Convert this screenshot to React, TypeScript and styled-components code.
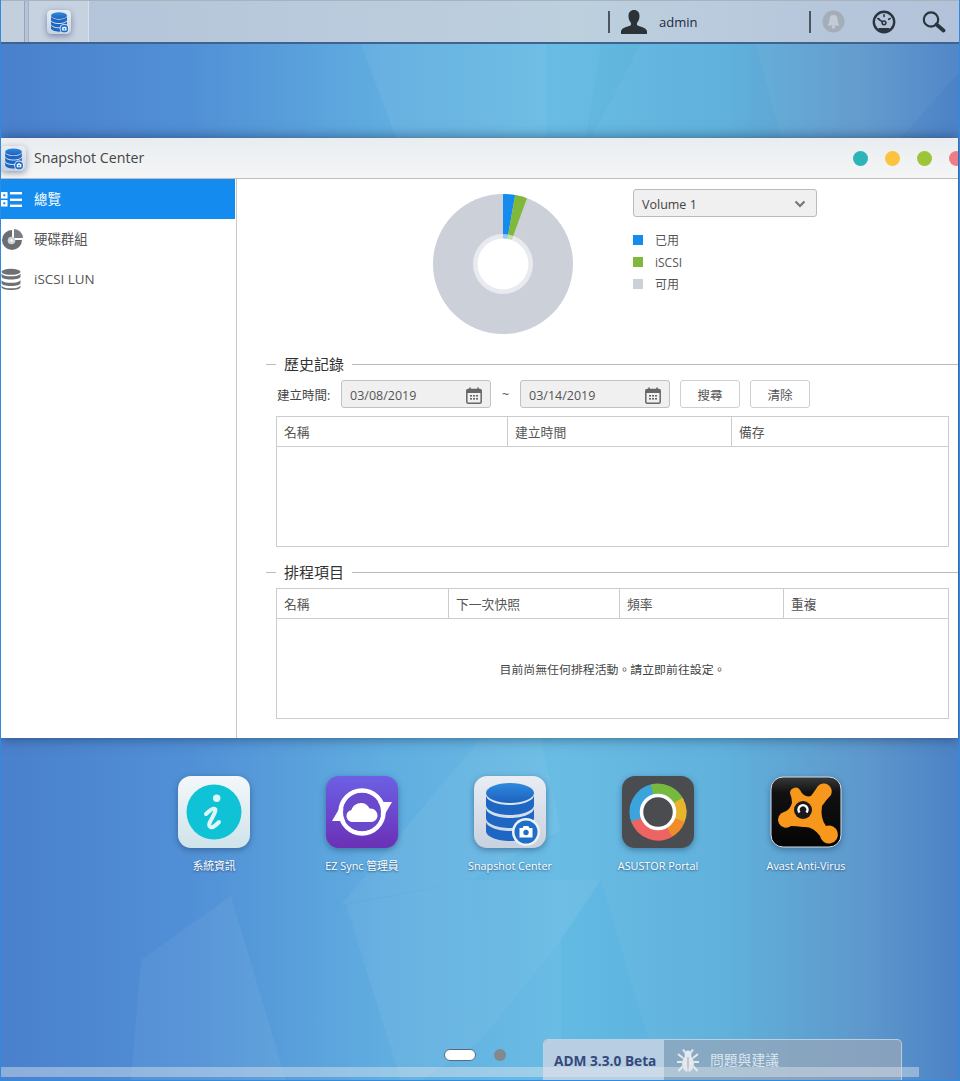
import React from "react";
import styled, { createGlobalStyle } from "styled-components";

const FONT = `"Open Sans", "Noto Sans CJK TC", sans-serif`;

const GlobalStyle = createGlobalStyle`
  html, body {
    margin: 0;
    padding: 0;
    background: #4a86c8;
  }
  * {
    box-sizing: border-box;
  }
`;

const Page = styled.div`
  position: relative;
  width: 960px;
  height: 1081px;
  overflow: hidden;
  display: flex;
  flex-direction: column;
  border: solid #2f8be0;
  border-width: 0 1px 1px;
  font-family: ${FONT};
  background: linear-gradient(
    90deg,
    #4a80cc 0%,
    #5190d6 20%,
    #60ade0 40%,
    #69bce4 58%,
    #60b2dc 75%,
    #5e98cc 90%,
    #4c82c6 100%
  );
`;

const Wallpaper = styled.svg`
  position: absolute;
  inset: 0;
  width: 960px;
  height: 1081px;
`;

const Layer = styled.div`
  position: relative;
  display: flex;
  flex-direction: column;
  height: 100%;
`;

/* top bar */
const TopBar = styled.header`
  height: 44px;
  flex: none;
  display: flex;
  align-items: stretch;
  background: linear-gradient(90deg, #b4c3d9, #bdd0de 60%, #b2c2da);
  border-top: 1px solid #a9b3be;
  border-bottom: 2px solid #3f6391;
`;

const StartCell = styled.div`
  width: 24px;
  background: #c3cfdc;
  border-right: 1px solid #98a6b8;
`;

const TaskTab = styled.div`
  width: 61px;
  margin-left: 3px;
  display: flex;
  align-items: center;
  justify-content: center;
  background: #c6d2e0;
  border-left: 1px solid #a3b0c2;
  border-right: 1px solid #d8e0ea;
`;

const TopRight = styled.div`
  margin-left: auto;
  display: flex;
  align-items: center;
  padding-right: 13px;
`;

const Separator = styled.span<{ $after: number }>`
  width: 2px;
  height: 22px;
  background: #4c5560;
  margin-right: ${(p) => p.$after}px;
`;

const UserName = styled.span`
  width: 162px;
  padding-left: 12px;
  font-size: 13px;
  color: #1e2a3e;
`;

const TopIcon = styled.svg<{ $after?: number }>`
  display: block;
  margin-right: ${(p) => p.$after ?? 0}px;
`;

/* window */
const AppWindow = styled.section`
  height: 600px;
  width: 957px;
  margin-top: 94px;
  flex: none;
  display: flex;
  flex-direction: column;
  overflow: hidden;
  background: #fff;
  box-shadow: 0 0 12px rgba(20, 40, 70, 0.6);
`;

const TitleBar = styled.div`
  height: 41px;
  flex: none;
  display: flex;
  align-items: center;
  background: linear-gradient(#e9edf0, #f5f5f5);
  border-bottom: 1px solid #bdbdbd;
`;

const WindowTitle = styled.span`
  margin-left: 8px;
  padding-bottom: 2px;
  font-size: 14.2px;
  color: #444;
`;

const Dots = styled.div`
  margin-left: auto;
  display: flex;
  gap: 17px;
  margin-right: -6px;
`;

const Dot = styled.span<{ $color: string }>`
  width: 15px;
  height: 15px;
  border-radius: 50%;
  background: ${(p) => p.$color};
`;

const WindowBody = styled.div`
  flex: 1;
  display: flex;
  min-height: 0;
`;

const Sidebar = styled.nav`
  width: 236px;
  flex: none;
  padding-right: 1px;
  border-right: 1px solid #c9c9c9;
`;

const NavItem = styled.div<{ $active?: boolean }>`
  height: 40px;
  display: flex;
  align-items: center;
  gap: 11px;
  font-size: 13.4px;
  color: ${(p) => (p.$active ? "#fff" : "#555")};
  background: ${(p) => (p.$active ? "#148bee" : "transparent")};
`;

const NavLabel = styled.span<{ $latin?: boolean }>`
  padding-bottom: ${(p) => (p.$latin ? 0 : 2)}px;
`;

const NavIcon = styled.svg`
  display: block;
  width: 22px;
  height: 22px;
  flex: none;
`;

const Main = styled.main`
  flex: 1;
  min-width: 0;
`;

const Overview = styled.div`
  height: 176px;
  display: flex;
  align-items: flex-start;
  padding: 10px 0 0 196px;
`;

const Chart = styled.svg`
  display: block;
  margin-top: 5px;
  flex: none;
`;

const VolumeColumn = styled.div`
  margin-left: 60px;
  width: 184px;
`;

const VolumeSelect = styled.div`
  height: 28px;
  display: flex;
  align-items: center;
  justify-content: space-between;
  padding: 2px 10px 0 8px;
  font-size: 12.5px;
  color: #444;
  background: #f0f0f0;
  border: 1px solid #bbb;
  border-radius: 3px;
`;

const Legend = styled.ul`
  list-style: none;
  margin: 12px 0 0;
  padding: 0;
`;

const LegendRow = styled.li`
  height: 22px;
  display: flex;
  align-items: center;
  gap: 12px;
  font-size: 12px;
  color: #555;
`;

const Swatch = styled.span<{ $color: string }>`
  width: 10px;
  height: 10px;
  background: ${(p) => p.$color};
`;

const SectionHeading = styled.div<{ $top?: number }>`
  height: 20px;
  margin-top: ${(p) => p.$top ?? 0}px;
  padding-left: 29px;
  display: flex;
  align-items: center;
  gap: 8px;
  font-size: 15px;
  color: #333;

  &::before,
  &::after {
    content: "";
    height: 1px;
    margin-top: -1px;
    background: #bbb;
  }
  &::before {
    width: 10px;
  }
  &::after {
    flex: 1;
  }
`;

const HeadingText = styled.span`
  padding-bottom: 3px;
`;

const FilterRow = styled.div`
  height: 28px;
  margin: 5px 0 0 40px;
  display: flex;
  align-items: center;
  font-size: 12.5px;
  color: #444;
`;

const FilterLabel = styled.span`
  width: 64px;
`;

const DateInput = styled.div`
  width: 150px;
  height: 28px;
  display: flex;
  align-items: center;
  justify-content: space-between;
  padding: 2px 8px 0;
  background: #f0f0f0;
  border: 1px solid #c2c2c2;
  border-radius: 3px;
  color: #555;
`;

const Tilde = styled.span`
  width: 29px;
  text-align: center;
  color: #555;
`;

const Action = styled.button`
  width: 60px;
  height: 28px;
  margin-left: 10px;
  padding: 0;
  font: inherit;
  color: #555;
  background: #fff;
  border: 1px solid #d0d0d0;
  border-radius: 3px;
`;

const Table = styled.div<{ $top: number }>`
  width: 673px;
  height: 131px;
  margin: ${(p) => p.$top}px 0 0 39px;
  display: flex;
  flex-direction: column;
  border: 1px solid #ccc;
`;

const TableHead = styled.div<{ $cols: string }>`
  height: 30px;
  flex: none;
  display: grid;
  grid-template-columns: ${(p) => p.$cols};
  border-bottom: 1px solid #ccc;
`;

const HeadCell = styled.div`
  display: flex;
  align-items: center;
  padding: 0 0 0 7px;
  font-size: 12.8px;
  color: #555;
  border-right: 1px solid #ccc;

  &:last-child {
    border-right: 0;
  }
`;

const TableBody = styled.div`
  flex: 1;
  display: flex;
  align-items: center;
  justify-content: center;
  font-size: 11.9px;
  color: #444;
`;

/* desktop */
const Dock = styled.div`
  margin-top: 38px;
  padding-left: 139px;
  display: flex;
`;

const DockItem = styled.div`
  width: 148px;
  display: flex;
  flex-direction: column;
  align-items: center;
`;

const AppIcon = styled.svg`
  display: block;
  filter: drop-shadow(0 2px 3px rgba(20, 50, 90, 0.45));
`;

const DockLabel = styled.span`
  margin-top: 10px;
  line-height: 16px;
  font-size: 10.8px;
  color: #fff;
  text-shadow: 0 1px 2px rgba(20, 50, 90, 0.7);
`;

const Footer = styled.footer`
  margin-top: auto;
  height: 41px;
  padding-left: 443px;
  display: flex;
`;

const PagerPill = styled.span`
  width: 32px;
  height: 12px;
  margin-top: 10px;
  background: #fff;
  border: 1px solid #566a80;
  border-radius: 6px;
`;

const PagerDot = styled.span`
  width: 12px;
  height: 12px;
  margin: 10px 0 0 18px;
  background: #84888f;
  border-radius: 50%;
`;

const FeedbackBar = styled.div`
  width: 359px;
  margin-left: 37px;
  display: flex;
  border: 1px solid rgba(230, 238, 245, 0.55);
  border-bottom: 0;
  border-radius: 5px 5px 0 0;
  overflow: hidden;
  background: rgba(150, 165, 185, 0.75);
`;

const Version = styled.div`
  width: 120px;
  padding: 11px 0 0 10px;
  font-size: 13.7px;
  font-weight: 700;
  color: #35497c;
  background: #b8cfe3;
`;

const Feedback = styled.div`
  padding: 9px 0 0 13px;
  display: flex;
  align-items: flex-start;
  gap: 11px;
  font-size: 13.8px;
  color: #dbe6f0;
`;

const ScrollTrack = styled.div`
  position: absolute;
  left: -1px;
  bottom: 3px;
  width: 919px;
  height: 10px;
  background: rgba(225, 230, 238, 0.45);
`;

/* drawings */
const cylinder = (y: number) =>
  `M12 ${y}v10c0 5.5 10.7 10 24 10s24-4.5 24-10v-10c0 5.5-10.7 10-24 10s-24-4.5-24-10z`;

const SnapshotIcon = ({ size }: { size: number }) => (
  <AppIcon width={size} height={size} viewBox="0 0 72 72">
    <defs>
      <linearGradient id={`tile${size}`} x1="0" y1="0" x2="0" y2="1">
        <stop offset="0" stopColor="#e9edf3" />
        <stop offset="1" stopColor="#c8d1de" />
      </linearGradient>
      <linearGradient id={`disc${size}`} x1="0" y1="0" x2="0" y2="1">
        <stop offset="0" stopColor="#2f88dd" />
        <stop offset="1" stopColor="#1c62bf" />
      </linearGradient>
    </defs>
    <rect width="72" height="72" rx="13" fill={`url(#tile${size})`} />
    <ellipse cx="36" cy="17" rx="24" ry="10" fill={`url(#disc${size})`} />
    {[19, 32, 45].map((y) => (
      <path key={y} d={cylinder(y)} fill="#1d66c4" />
    ))}
    <circle cx="52" cy="56" r="14" fill="#eef2f6" />
    <circle cx="52" cy="56" r="11.5" fill="#1f6fc8" />
    <path d="M45.5 52h3l1.2-2h4.6l1.2 2h3v9.5h-13z" fill="#fff" />
    <circle cx="52" cy="56.5" r="2.7" fill="#1f6fc8" />
  </AppIcon>
);

const InfoIcon = () => (
  <AppIcon width={72} height={72} viewBox="0 0 72 72">
    <defs>
      <linearGradient id="infoTile" x1="0" y1="0" x2="0" y2="1">
        <stop offset="0" stopColor="#f3f8fa" />
        <stop offset="1" stopColor="#cfe3ea" />
      </linearGradient>
    </defs>
    <rect width="72" height="72" rx="13" fill="url(#infoTile)" />
    <circle cx="36" cy="36" r="27.5" fill="#10c2d6" />
    <circle cx="38.7" cy="22.3" r="3.7" fill="#dff6f9" />
    <path
      d="M28 38C31 35 35 32 37 33C39 34 34 42 32 46C30 50 32 52 35 51C37 50 39 48 41 46"
      fill="none"
      stroke="#dff6f9"
      strokeWidth="4"
      strokeLinecap="round"
    />
  </AppIcon>
);

const SyncIcon = () => (
  <AppIcon width={72} height={72} viewBox="0 0 72 72">
    <defs>
      <linearGradient id="syncTile" x1="0" y1="0" x2="0" y2="1">
        <stop offset="0" stopColor="#6c60e4" />
        <stop offset="1" stopColor="#6b30b6" />
      </linearGradient>
    </defs>
    <rect width="72" height="72" rx="13" fill="url(#syncTile)" />
    <circle cx="36" cy="36" r="21.5" fill="none" stroke="#fff" strokeWidth="4.5" />
    <path d="M6 45L23 45L16 28z" fill="#fff" />
    <path d="M66 26L49 26L56 43z" fill="#fff" />
    <circle cx="36" cy="36" r="19" fill="#6a49cc" />
    <path
      d="M27 46c-4 0-6.500-2.700-6.500-6 0-3 2-5.500 5-6 1-4 5-7 9.500-7 4 0 7 2 8.500 5.500 4.500-.5 8 3 8 7 0 3.500-2.500 6.500-6.500 6.500z"
      fill="#fff"
    />
  </AppIcon>
);

const polar = (r: number, deg: number) => {
  const a = ((deg - 90) * Math.PI) / 180;
  return `${(36 + r * Math.cos(a)).toFixed(2)} ${(36 + r * Math.sin(a)).toFixed(2)}`;
};

const arc = (r: number, from: number, to: number) =>
  `M${polar(r, from)}A${r} ${r} 0 ${to - from > 180 ? 1 : 0} 1 ${polar(r, to)}`;

const PortalIcon = () => (
  <AppIcon width={72} height={72} viewBox="0 0 72 72">
    <rect width="72" height="72" rx="13" fill="#4b4c4f" />
    <g fill="none" strokeWidth="11">
      <path d={arc(23, 245, 350)} stroke="#3ba4dc" />
      <path d={arc(23, -15, 65)} stroke="#76b93f" />
      <path d={arc(23, 60, 115)} stroke="#e6b52c" />
      <path d={arc(23, 110, 155)} stroke="#f08c2a" />
      <path d={arc(23, 150, 250)} stroke="#ee6463" />
    </g>
    <circle cx="36" cy="36" r="16.5" fill="#4b4c4f" stroke="#fff" strokeWidth="3.5" />
  </AppIcon>
);

const AvastIcon = () => (
  <AppIcon width={72} height={72} viewBox="0 0 72 72">
    <defs>
      <linearGradient id="avastTile" x1="0" y1="0" x2="0" y2="1">
        <stop offset="0" stopColor="#3a3a3a" />
        <stop offset="0.22" stopColor="#111" />
        <stop offset="1" stopColor="#050505" />
      </linearGradient>
    </defs>
    <rect x="1" y="1" width="70" height="70" rx="12" fill="url(#avastTile)" stroke="#d7dde2" strokeWidth="1" />
    <path
      d="M20 17A5.500 5.500 0 0 1 30 14Q34 22 41 20Q44 16 48 10A8 8 0 0 1 61 19Q56 24 52 30Q50 42 56 50A9 9 0 1 1 50 60Q43 50 33 51Q26 50 21 50A8 8 0 1 1 14 36Q20 34 22 27Q22 22 20 17Z"
      fill="#f7981d"
    />
    <circle cx="33" cy="34" r="9" fill="#1a1a1a" />
    <path d="M29.500 36.500a4.500 4.500 0 1 1 7 0" fill="none" stroke="#fff" strokeWidth="2.500" />
  </AppIcon>
);

const UserIcon = () => (
  <TopIcon width={26} height={24} viewBox="0 0 26 24">
    <path
      d="M13 0c3.500 0 5.500 2.500 5.500 6 0 3-1 5-2.500 7v2c1 1.500 9 2 10 6v3H0v-3c1-4 9-4.500 10-6v-2C8.500 11 7.500 9 7.500 6c0-3.500 2-6 5.500-6z"
      fill="#2b3238"
    />
  </TopIcon>
);

const BellIcon = () => (
  <TopIcon $after={27} width={23} height={23} viewBox="0 0 23 23">
    <circle cx="11.500" cy="11.500" r="11" fill="#a4aeba" />
    <path
      d="M11.500 5c2.800 0 4 2 4 4.500 0 2.500.5 3.500 1.500 5v1H6v-1c1-1.500 1.500-2.500 1.500-5C7.500 7 8.700 5 11.500 5z"
      fill="#c3ccd6"
    />
    <circle cx="11.500" cy="17" r="1.700" fill="#c3ccd6" />
  </TopIcon>
);

const GaugeIcon = () => (
  <TopIcon $after={26} width={24} height={24} viewBox="0 0 24 24">
    <circle cx="12" cy="12" r="10.200" fill="none" stroke="#2b3540" strokeWidth="2.400" />
    <path d="M5 20a10.700 10.700 0 0 0 14 0l-2-2h-10z" fill="#2b3540" />
    <g stroke="#2b3540" strokeWidth="1.600" strokeLinecap="round">
      <path d="M12 4.800v1.700" />
      <path d="M5.800 8.500l1.500.8" />
      <path d="M18.200 8.500l-1.500.8" />
      <path d="M7 9.500l3.600 2.300" />
    </g>
    <circle cx="12" cy="12.800" r="1.900" fill="none" stroke="#2b3540" strokeWidth="1.500" />
  </TopIcon>
);

const SearchIcon = () => (
  <TopIcon width={24} height={22} viewBox="0 0 24 22">
    <circle cx="9" cy="8.500" r="7.200" fill="none" stroke="#2b3540" strokeWidth="2.200" />
    <path d="M14.500 13.500l7 6" stroke="#2b3540" strokeWidth="3.800" strokeLinecap="round" />
  </TopIcon>
);

const ListNavIcon = () => (
  <NavIcon viewBox="0 0 22 22">
    <g fill="#fff">
      <rect x="0" y="4" width="6.500" height="6.500" />
      <rect x="0" y="12" width="6.500" height="6.500" />
      <rect x="9" y="4" width="12" height="2.400" />
      <rect x="9" y="10.600" width="12" height="2.400" />
      <rect x="9" y="16.600" width="12" height="2.400" />
    </g>
    <rect x="2.300" y="6.300" width="2" height="2" fill="#148bee" />
    <rect x="2.300" y="14.300" width="2" height="2" fill="#148bee" />
  </NavIcon>
);

const DiskNavIcon = () => (
  <NavIcon viewBox="0 0 22 22">
    <path d="M11 12L21 12A10 10 0 1 1 11 2Z" fill="#6a6d72" />
    <path d="M13 10L13 1A9 9 0 0 1 22 10Z" fill="#7b7e83" />
    <circle cx="10.500" cy="12.500" r="3.800" fill="#cfd2d6" />
    <circle cx="10.500" cy="12.500" r="1.300" fill="#fff" />
  </NavIcon>
);

const StackNavIcon = () => (
  <NavIcon viewBox="0 0 22 22">
    <g fill="#6d7075">
      <ellipse cx="10" cy="3.800" rx="9.500" ry="3" />
      <path d="M0.500 5.500v3c0 2 4 3 9.500 3s9.500-1 9.500-3v-3c-1 2-5 2.800-9.500 2.800s-8.500-.8-9.500-2.800z" />
      <path d="M0.500 12v3c0 2 4 3 9.500 3s9.500-1 9.500-3v-3c-1 2-5 2.800-9.500 2.800s-8.500-.8-9.500-2.800z" />
      <path d="M0.500 17.500v1.500c0 2 4 3 9.500 3s9.500-1 9.500-3v-1.500c-1 2-5 2.800-9.500 2.800s-8.500-.8-9.500-2.800z" />
    </g>
  </NavIcon>
);

const CalendarIcon = () => (
  <svg width="16" height="17" viewBox="0 0 16 17">
    <rect x="0.800" y="2.500" width="14.400" height="13.700" rx="1.500" fill="none" stroke="#666" strokeWidth="1.500" />
    <rect x="0.800" y="2.500" width="14.400" height="3.500" fill="#666" />
    <path d="M4 0.500v3M12 0.500v3" stroke="#666" strokeWidth="1.600" />
    <g fill="#666">
      {[4, 7, 10].map((x) => (
        <React.Fragment key={x}>
          <rect x={x} y="8" width="2" height="1.600" />
          <rect x={x} y="11" width="2" height="1.600" />
        </React.Fragment>
      ))}
    </g>
  </svg>
);

const BugIcon = () => (
  <svg width="22" height="24" viewBox="0 0 22 24">
    <g fill="#e4e9ee">
      <ellipse cx="11" cy="14.500" rx="6" ry="8.500" />
      <circle cx="11" cy="5" r="3.500" />
    </g>
    <g stroke="#e4e9ee" strokeWidth="2" fill="none">
      <path d="M6 0.500l2 3M16 0.500l-2 3" />
      <path d="M1 5l5 4M21 5l-5 4" />
      <path d="M0 13h5M22 13h-5" />
      <path d="M1.500 22l4-4.500M20.500 22l-4-4.500" />
    </g>
    <path d="M11 8v15" stroke="#9aa7b8" strokeWidth="1" />
  </svg>
);

const UsageChart = () => {
  const slice = (from: number, to: number) => {
    const point = (deg: number) => {
      const a = ((deg - 90) * Math.PI) / 180;
      return `${70 + 70 * Math.cos(a)} ${70 + 70 * Math.sin(a)}`;
    };
    return `M70 70L${point(from)}A70 70 0 ${to - from > 180 ? 1 : 0} 1 ${point(to)}Z`;
  };
  return (
    <Chart width={140} height={140} viewBox="0 0 140 140">
      <circle cx="70" cy="70" r="70" fill="#ccd0d8" />
      <path d={slice(0, 10)} fill="#148bee" />
      <path d={slice(10, 20)} fill="#7fb83a" />
      <circle cx="70" cy="70" r="30" fill="#fff" fillOpacity="0.55" />
      <circle cx="70" cy="70" r="25.500" fill="#fff" />
    </Chart>
  );
};

const Facets = () => (
  <Wallpaper viewBox="0 0 960 1081">
    <polygon points="360,44 545,44 545,138 395,138" fill="#fff" fillOpacity="0.05" />
    <polygon points="600,44 640,44 590,138 585,138" fill="#3fb0d0" fillOpacity="0.12" />
    <polygon points="755,44 960,44 960,70 900,138 780,138" fill="#fff" fillOpacity="0.04" />
    <polygon points="230,896 140,960 130,1081 285,1081" fill="#fff" fillOpacity="0.05" />
    <polygon points="345,905 470,880 480,1040 420,1081 400,1081" fill="#fff" fillOpacity="0.05" />
    <polygon points="480,738 540,738 560,830 470,880 340,905" fill="#fff" fillOpacity="0.05" />
    <polygon points="600,880 660,1081 560,1081 560,940" fill="#2fa6de" fillOpacity="0.1" />
    <polygon points="470,880 600,880 560,940 480,1040" fill="#fff" fillOpacity="0.04" />
  </Wallpaper>
);

const App = () => (
  <Page>
    <GlobalStyle />
    <Facets />
    <Layer>
      <TopBar>
        <StartCell />
        <TaskTab>
          <SnapshotIcon size={24} />
        </TaskTab>
        <TopRight>
          <Separator $after={11} />
          <UserIcon />
          <UserName>admin</UserName>
          <Separator $after={11} />
          <BellIcon />
          <GaugeIcon />
          <SearchIcon />
        </TopRight>
      </TopBar>

      <AppWindow>
        <TitleBar>
          <SnapshotIcon size={25} />
          <WindowTitle>Snapshot Center</WindowTitle>
          <Dots>
            <Dot $color="#2cb5b9" />
            <Dot $color="#fcc341" />
            <Dot $color="#9cc53a" />
            <Dot $color="#f27c84" />
          </Dots>
        </TitleBar>
        <WindowBody>
          <Sidebar>
            <NavItem $active>
              <ListNavIcon />
              <NavLabel>總覽</NavLabel>
            </NavItem>
            <NavItem>
              <DiskNavIcon />
              <NavLabel>硬碟群組</NavLabel>
            </NavItem>
            <NavItem>
              <StackNavIcon />
              <NavLabel $latin>iSCSI LUN</NavLabel>
            </NavItem>
          </Sidebar>
          <Main>
            <Overview>
              <UsageChart />
              <VolumeColumn>
                <VolumeSelect>
                  Volume 1
                  <svg width="12" height="8" viewBox="0 0 12 8">
                    <path d="M1.500 1.500L6 6l4.500-4.500" fill="none" stroke="#777" strokeWidth="2.200" />
                  </svg>
                </VolumeSelect>
                <Legend>
                  <LegendRow>
                    <Swatch $color="#148bee" />
                    已用
                  </LegendRow>
                  <LegendRow>
                    <Swatch $color="#7fb83a" />
                    iSCSI
                  </LegendRow>
                  <LegendRow>
                    <Swatch $color="#ccd0d8" />
                    可用
                  </LegendRow>
                </Legend>
              </VolumeColumn>
            </Overview>

            <SectionHeading>
              <HeadingText>歷史記錄</HeadingText>
            </SectionHeading>
            <FilterRow>
              <FilterLabel>建立時間:</FilterLabel>
              <DateInput>
                03/08/2019
                <CalendarIcon />
              </DateInput>
              <Tilde>~</Tilde>
              <DateInput>
                03/14/2019
                <CalendarIcon />
              </DateInput>
              <Action>搜尋</Action>
              <Action>清除</Action>
            </FilterRow>
            <Table $top={8}>
              <TableHead $cols="231px 224px 1fr">
                <HeadCell>名稱</HeadCell>
                <HeadCell>建立時間</HeadCell>
                <HeadCell>備存</HeadCell>
              </TableHead>
              <TableBody />
            </Table>

            <SectionHeading $top={16}>
              <HeadingText>排程項目</HeadingText>
            </SectionHeading>
            <Table $top={5}>
              <TableHead $cols="172px 171px 164px 1fr">
                <HeadCell>名稱</HeadCell>
                <HeadCell>下一次快照</HeadCell>
                <HeadCell>頻率</HeadCell>
                <HeadCell>重複</HeadCell>
              </TableHead>
              <TableBody>目前尚無任何排程活動。請立即前往設定。</TableBody>
            </Table>
          </Main>
        </WindowBody>
      </AppWindow>

      <Dock>
        <DockItem>
          <InfoIcon />
          <DockLabel>系統資訊</DockLabel>
        </DockItem>
        <DockItem>
          <SyncIcon />
          <DockLabel>EZ Sync 管理員</DockLabel>
        </DockItem>
        <DockItem>
          <SnapshotIcon size={72} />
          <DockLabel>Snapshot Center</DockLabel>
        </DockItem>
        <DockItem>
          <PortalIcon />
          <DockLabel>ASUSTOR Portal</DockLabel>
        </DockItem>
        <DockItem>
          <AvastIcon />
          <DockLabel>Avast Anti-Virus</DockLabel>
        </DockItem>
      </Dock>

      <Footer>
        <PagerPill />
        <PagerDot />
        <FeedbackBar>
          <Version>ADM 3.3.0 Beta</Version>
          <Feedback>
            <BugIcon />
            問題與建議
          </Feedback>
        </FeedbackBar>
      </Footer>
      <ScrollTrack />
    </Layer>
  </Page>
);

export default App;
